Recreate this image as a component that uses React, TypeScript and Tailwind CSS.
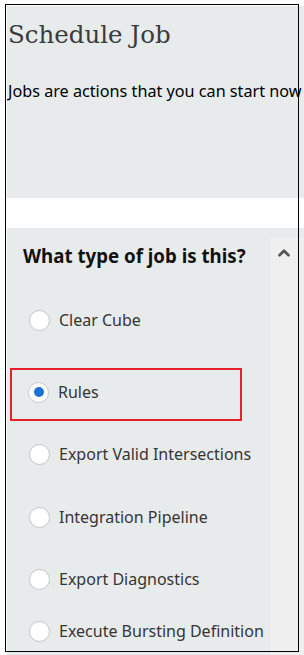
import { ChevronUp } from 'lucide-react';

interface JobOption {
  label: string;
  selected?: boolean;
}

const sans = { fontFamily: '"Noto Sans", "Open Sans", sans-serif' };

function Radio({ checked }: { checked?: boolean }) {
  return (
    <span className="flex h-[21px] w-[21px] shrink-0 items-center justify-center rounded-full border border-[#c3c6c8] bg-white">
      {checked && <span className="h-[10px] w-[10px] rounded-full bg-[#1b72d4]" />}
    </span>
  );
}

function OptionRow({ option }: { option: JobOption }) {
  return (
    <label className="flex h-6 items-center gap-[9px] whitespace-nowrap text-[16px] text-[#353535]">
      <Radio checked={option.selected} />
      <span>{option.label}</span>
    </label>
  );
}

export default function App() {
  return (
    <div className="relative h-[655px] w-[304px] overflow-hidden bg-white" style={sans}>
      <div className="ml-[7px] pt-[6px]">
        {/* header */}
        <section className="h-[192px] overflow-hidden bg-[#e8ebec] pl-[1px]">
          <h1
            className="pt-[13px] text-[24.5px] leading-[32px] text-[#3b3b3b] whitespace-nowrap"
            style={{ fontFamily: '"DejaVu Serif", Georgia, serif' }}
          >
            Schedule Job
          </h1>
          <p className="mt-[30px] whitespace-nowrap text-[16.2px] leading-5 text-black">
            Jobs are actions that you can start now
          </p>
        </section>

        <div className="h-[30px] bg-white" />

        {/* job type panel */}
        <section className="flex h-[440px] bg-[#e8ebec]">
          <div className="flex-1">
            <h2 className="pl-4 pt-[16px] text-[18.7px] font-bold leading-6 text-[#111]">
              What type of job is this?
            </h2>
            <div className="mt-[40px] pl-[22px]">
              <OptionRow option={{ label: 'Clear Cube' }} />
            </div>
            <div className="ml-[3px] mt-[36px] h-[53px] w-[232px] border-2 border-[#e8202a] pl-[16px] pt-[10px]">
              <OptionRow option={{ label: 'Rules', selected: true }} />
            </div>
            <div className="flex flex-col pl-[22px]">
              <div className="mt-[21px]">
                <OptionRow option={{ label: 'Export Valid Intersections' }} />
              </div>
              <div className="mt-[39px]">
                <OptionRow option={{ label: 'Integration Pipeline' }} />
              </div>
              <div className="mt-[38px]">
                <OptionRow option={{ label: 'Export Diagnostics' }} />
              </div>
              <div className="mt-[28px]">
                <OptionRow option={{ label: 'Execute Bursting Definition' }} />
              </div>
            </div>
          </div>
          <aside className="mt-[10px] flex w-[34px] justify-start bg-[#efefef] pl-[5px] pt-[6px]">
            <ChevronUp className="h-[18px] w-[18px] text-[#555]" strokeWidth={3.5} />
          </aside>
        </section>
      </div>

      {/* screenshot frame */}
      <div className="pointer-events-none absolute left-[5px] top-[4px] h-[648px] w-[294px] border-[1.5px] border-black" />
    </div>
  );
}
